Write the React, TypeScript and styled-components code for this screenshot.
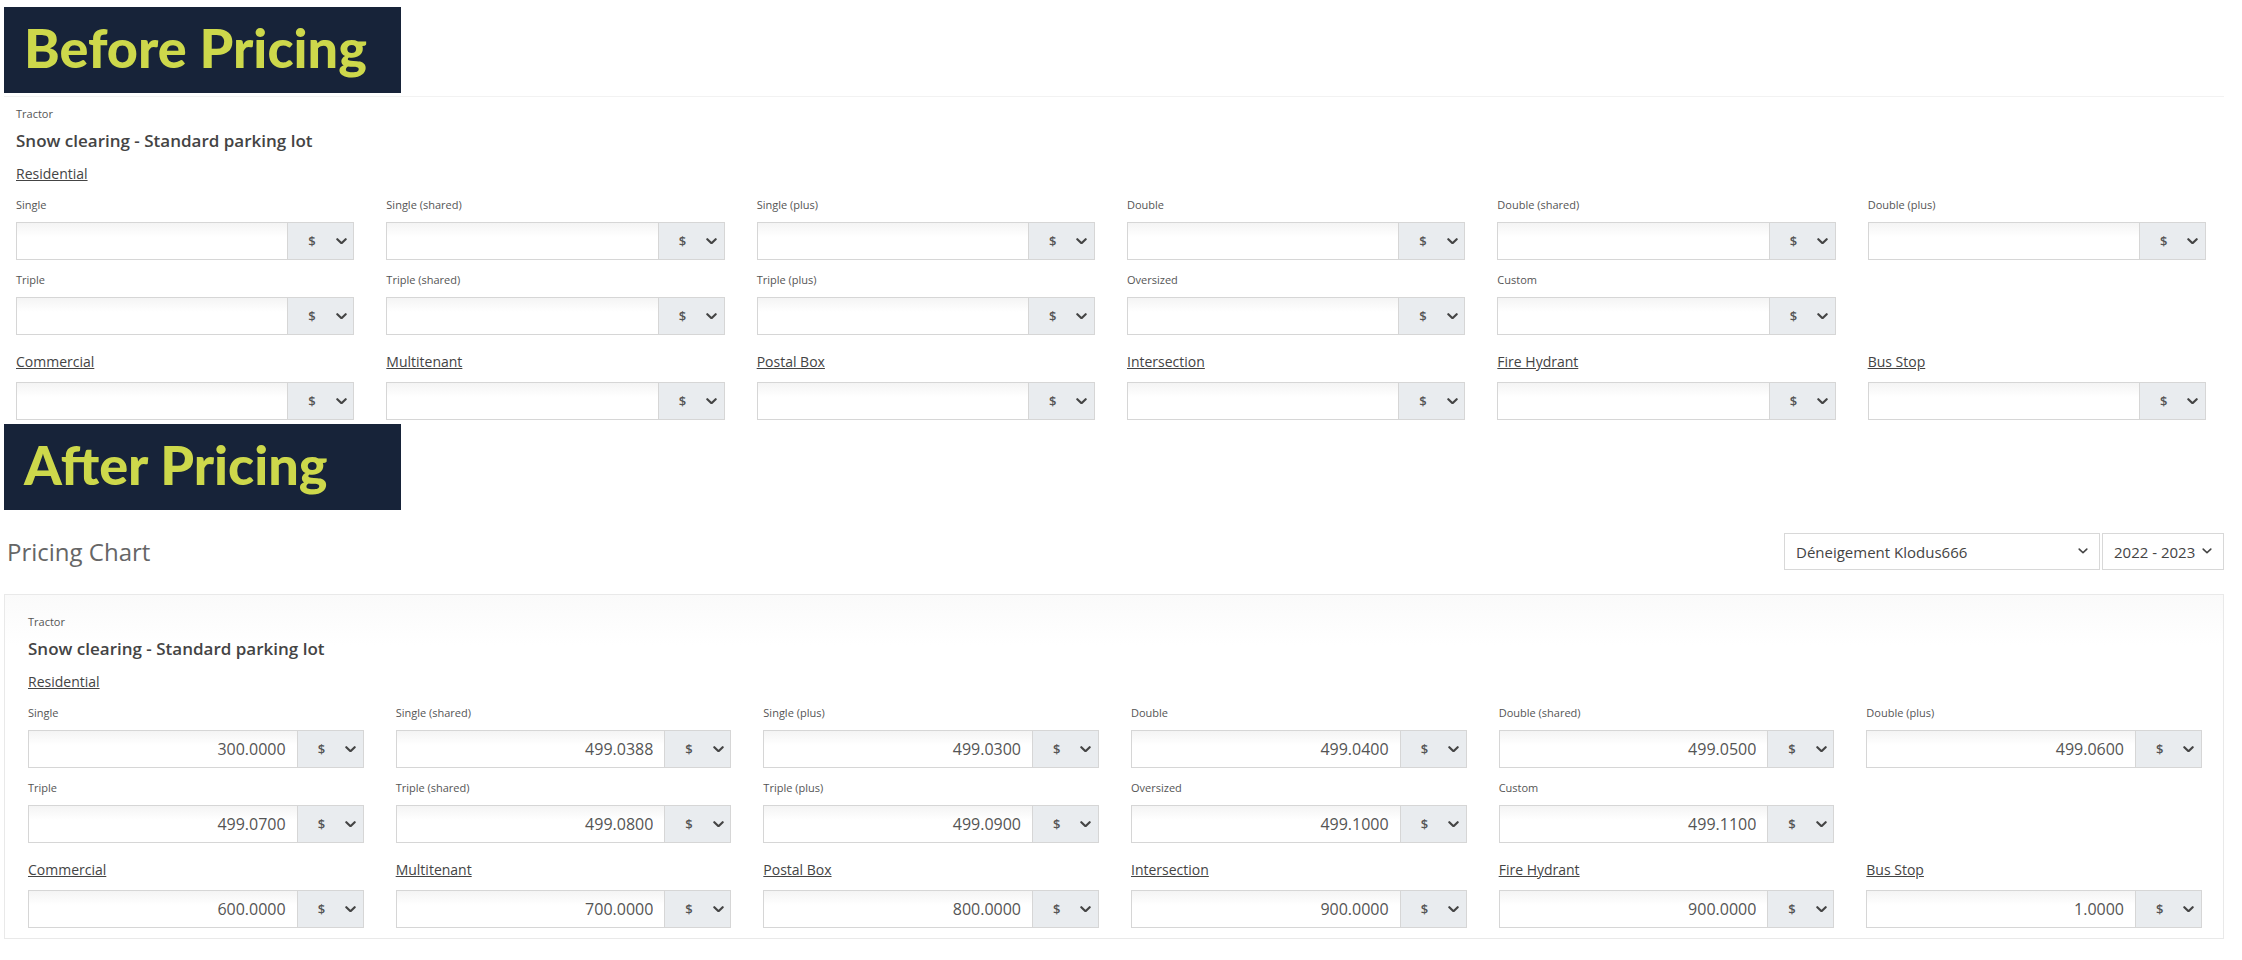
import React from 'react';
import styled, {createGlobalStyle} from 'styled-components';

const GlobalStyle = createGlobalStyle`
    body {
        margin: 0;
        background: #fff;
        font-family: 'Open Sans', 'Liberation Sans', sans-serif;
        color: #555;
    }
`

type Field = { label: string; value?: string }

const residential: Field[][] = [
    [
        {label: 'Single', value: '300.0000'},
        {label: 'Single (shared)', value: '499.0388'},
        {label: 'Single (plus)', value: '499.0300'},
        {label: 'Double', value: '499.0400'},
        {label: 'Double (shared)', value: '499.0500'},
        {label: 'Double (plus)', value: '499.0600'},
    ],
    [
        {label: 'Triple', value: '499.0700'},
        {label: 'Triple (shared)', value: '499.0800'},
        {label: 'Triple (plus)', value: '499.0900'},
        {label: 'Oversized', value: '499.1000'},
        {label: 'Custom', value: '499.1100'},
    ],
]

const others: Field[] = [
    {label: 'Commercial', value: '600.0000'},
    {label: 'Multitenant', value: '700.0000'},
    {label: 'Postal Box', value: '800.0000'},
    {label: 'Intersection', value: '900.0000'},
    {label: 'Fire Hydrant', value: '900.0000'},
    {label: 'Bus Stop', value: '1.0000'},
]

const Chevron = ({size = 11, weight = 2.2}: { size?: number; weight?: number }) => (
    <svg width={size} height={size * 0.62} viewBox="0 0 11 7" fill="none">
        <polyline points="1.2,1.2 5.5,5.4 9.8,1.2" stroke="#444" strokeWidth={weight}
                  strokeLinecap="round" strokeLinejoin="round"/>
    </svg>
)

const PriceInput = ({value, filled}: { value?: string; filled: boolean }) => (
    <InputGroup>
        <ValueInput readOnly value={filled ? value : ''}/>
        <CurrencyAddon>
            <span>$</span>
            <Chevron/>
        </CurrencyAddon>
    </InputGroup>
)

const PriceCard = ({filled}: { filled: boolean }) => (
    <>
        <Category>Tractor</Category>
        <ServiceTitle>Snow clearing - Standard parking lot</ServiceTitle>
        <GroupTitle>Residential</GroupTitle>
        <FieldGrid $top={13}>
            {residential.flat().map(f => (
                <div key={f.label}>
                    <FieldLabel>{f.label}</FieldLabel>
                    <PriceInput value={f.value} filled={filled}/>
                </div>
            ))}
        </FieldGrid>
        <FieldGrid $top={17}>
            {others.map(f => (
                <div key={f.label}>
                    <HeaderLabel>{f.label}</HeaderLabel>
                    <PriceInput value={f.value} filled={filled}/>
                </div>
            ))}
        </FieldGrid>
    </>
)

export default function App() {
    return (
        <Page>
            <GlobalStyle/>
            <Banner>Before Pricing</Banner>
            <BeforeCard>
                <PriceCard filled={false}/>
            </BeforeCard>
            <Banner>After Pricing</Banner>
            <ChartHeader>
                <ChartTitle>Pricing Chart</ChartTitle>
                <Selects>
                    <SelectBox $width={316}>
                        <span>Déneigement Klodus666</span>
                        <Chevron size={10} weight={1.8}/>
                    </SelectBox>
                    <SelectBox $width={122}>
                        <span>2022 - 2023</span>
                        <Chevron size={10} weight={1.8}/>
                    </SelectBox>
                </Selects>
            </ChartHeader>
            <AfterCard>
                <PriceCard filled={true}/>
            </AfterCard>
        </Page>
    );
}

const Page = styled.div`
    width: 2242px;
    box-sizing: border-box;
    padding: 7px 18px 0 4px;
    height: 960px;
    overflow: hidden;
`

const Banner = styled.div`
    width: 397px;
    height: 86px;
    box-sizing: border-box;
    background: #172339;
    color: #cdd84b;
    font-family: 'Lato', 'Open Sans', sans-serif;
    font-weight: 900;
    font-size: 54px;
    line-height: 1;
    display: flex;
    align-items: center;
    padding: 0 0 4px 20px;
`

const BeforeCard = styled.div`
    margin-top: 3px;
    border-top: 1px solid #f2f2f2;
    padding: 9px 18px 4px 12px;
`

const AfterCard = styled.div`
    border: 1px solid #e9e9e9;
    background: linear-gradient(to bottom, #fafafa 0, #fff 50px);
    padding: 19px 21px 10px 23px;
`

const Category = styled.div`
    font-size: 11px;
    line-height: 16px;
    color: #555;
`

const ServiceTitle = styled.div`
    margin-top: 8px;
    font-size: 17px;
    line-height: 22px;
    font-weight: 600;
    color: #444;
`

const GroupTitle = styled.div`
    margin-top: 12px;
    font-size: 14px;
    line-height: 20px;
    color: #444;
    text-decoration: underline;
`

const FieldGrid = styled.div<{ $top: number }>`
    margin-top: ${p => p.$top}px;
    display: grid;
    grid-template-columns: repeat(6, 1fr);
    column-gap: 32px;
    row-gap: 12px;
`

const FieldLabel = styled.div`
    font-size: 11px;
    line-height: 16px;
    margin-bottom: 9px;
    color: #555;
`

const HeaderLabel = styled.div`
    font-size: 14px;
    line-height: 20px;
    margin-bottom: 10px;
    color: #444;
    text-decoration: underline;
`

const InputGroup = styled.div`
    display: flex;
    height: 38px;
    border: 1px solid #d6d6d6;
    box-sizing: border-box;
`

const ValueInput = styled.input`
    flex: 1;
    min-width: 0;
    border: none;
    outline: none;
    margin: 0;
    padding: 0 11px;
    text-align: right;
    font-family: 'Open Sans', 'Liberation Sans', sans-serif;
    font-size: 16px;
    color: #555;
    background: linear-gradient(to bottom, #f4f4f4 0, #fff 14px);
`

const CurrencyAddon = styled.div`
    width: 66px;
    flex: none;
    box-sizing: border-box;
    border-left: 1px solid #d6d6d6;
    background: #e9ecef;
    display: flex;
    align-items: center;
    padding-left: 20px;
    gap: 20px;
    font-size: 13px;
    font-weight: 600;
    color: #555;
`

const ChartHeader = styled.div`
    margin: 23px 0 24px;
    display: flex;
    align-items: center;
    justify-content: space-between;
`

const ChartTitle = styled.h2`
    margin: 0 0 0 3px;
    font-size: 24px;
    font-weight: 400;
    color: #666;
`

const Selects = styled.div`
    display: flex;
    gap: 2px;
`

const SelectBox = styled.div<{ $width: number }>`
    width: ${p => p.$width}px;
    height: 37px;
    box-sizing: border-box;
    border: 1px solid #d8d8d8;
    background: #fff;
    display: flex;
    align-items: center;
    justify-content: space-between;
    padding: 0 11px 0 11px;
    font-size: 15px;
    color: #444;
`
